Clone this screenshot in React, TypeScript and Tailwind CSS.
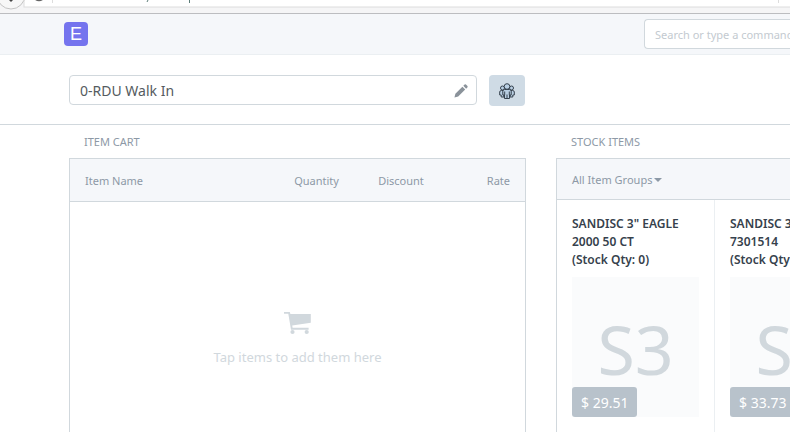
import { useState } from 'react';

const CART_COLUMNS = [
  { label: 'Quantity', className: 'w-[89px] text-center' },
  { label: 'Discount', className: 'w-[80px] text-center' },
  { label: 'Rate', className: 'w-[84px] pr-[15px] text-right' },
];

const ITEMS = [
  { name: 'SANDISC 3" EAGLE 2000 50 CT', qty: 0, abbr: 'S3', price: '$ 29.51' },
  { name: 'SANDISC 3" EAGLE 7301514', qty: 0, abbr: 'S3', price: '$ 33.73' },
];

export default function App() {
  return (
    <div className="h-screen overflow-hidden bg-white font-['Noto_Sans','Open_Sans',sans-serif] text-[#36414c]">
      <BrowserEdge />
      <Navbar />
      <CustomerBar />
      <main className="flex gap-[30px] pl-[69px]">
        <ItemCart />
        <StockItems />
      </main>
    </div>
  );
}

function BrowserEdge() {
  return (
    <div className="h-[14px] overflow-hidden border-b border-[#bcbdc0] bg-[#f5f5f6]">
      <svg width="100%" height="13" aria-hidden="true">
        <rect x="24" y="-10" width="100%" height="17" fill="#fff" stroke="#dcdcdc" />
        <circle cx="11" cy="-5" r="14" fill="#f7f7f7" stroke="#c4c4c4" />
        <path d="M9 0h4l-2 2z" fill="#444" />
        <path d="M35 -1q4 3 8 0" fill="none" stroke="#666" strokeWidth="1.5" />
        <path d="M52.500 0v3M778.500 0v3" stroke="#ddd" />
        <path d="M148 0l-1 2M189.500 0v3" stroke="#5c7c78" />
      </svg>
    </div>
  );
}

function Navbar() {
  return (
    <header className="flex h-[41px] items-center justify-between border-b border-[#ebeff2] bg-[#f5f7fa] pl-16">
      <a
        href="#"
        className="grid size-6 place-items-center rounded bg-[#7574ee] font-['Liberation_Sans',sans-serif] text-lg leading-6 text-white"
      >
        E
      </a>
      <input
        type="text"
        aria-label="Search"
        placeholder="Search or type a command"
        className="h-[30px] w-[146px] rounded-l border border-r-0 border-[#d1d8dd] bg-white pl-2.5 text-[11px] placeholder:text-[#c3cad0] focus:outline-none"
      />
    </header>
  );
}

function CustomerBar() {
  const [customer, setCustomer] = useState('0-RDU Walk In');

  return (
    <div className="flex h-[70px] items-start gap-3 border-b border-[#d1d8dd] pt-5 pl-[69px]">
      <div className="relative w-[408px]">
        <input
          type="text"
          aria-label="Customer"
          value={customer}
          onChange={(e) => setCustomer(e.target.value)}
          className="block h-[30px] w-full rounded border border-[#d1d8dd] pt-px pr-8 pl-2.5 text-sm text-[#555b60] focus:outline-none"
        />
        <PencilIcon />
      </div>
      <button
        type="button"
        aria-label="Customers"
        className="grid h-[31px] w-9 place-items-center rounded bg-[#cfdbe5]"
      >
        <GroupIcon />
      </button>
    </div>
  );
}

function ItemCart() {
  return (
    <section className="w-[457px] shrink-0">
      <h2 className="px-[15px] pt-2 pb-2 text-[11px] leading-[17px] text-[#8d99a6]">ITEM CART</h2>
      <div className="h-[360px] border border-[#d1d8dd]">
        <table className="w-full table-fixed border-separate border-spacing-0 bg-[#f5f7fa] text-[11px] text-[#8d99a6]">
          <thead>
            <tr className="h-[43px]">
              <th className="border-b border-[#d1d8dd] pt-0.5 pl-[15px] text-left font-normal">
                Item Name
              </th>
              {CART_COLUMNS.map((c) => (
                <th
                  key={c.label}
                  className={`${c.className} border-b border-[#d1d8dd] pt-0.5 font-normal`}
                >
                  {c.label}
                </th>
              ))}
            </tr>
          </thead>
        </table>
        <div className="flex flex-col items-center gap-3 pt-[110px] text-[#d1d8dd]">
          <CartIcon />
          <p className="text-[13px] leading-5">Tap items to add them here</p>
        </div>
      </div>
    </section>
  );
}

function StockItems() {
  return (
    <section className="min-w-0 flex-1">
      <h2 className="px-[15px] pt-2 pb-2 text-[11px] leading-[17px] text-[#8d99a6]">STOCK ITEMS</h2>
      <div className="h-[360px] border border-r-0 border-[#d1d8dd]">
        <div className="flex h-[41px] items-center border-b border-[#d1d8dd] bg-[#f5f7fa] px-[15px] pt-0.5">
          <button type="button" className="flex items-center gap-0.5 text-[11px] text-[#8d99a6]">
            All Item Groups
            <svg width="8" height="4" viewBox="0 0 8 4" fill="currentColor" aria-hidden="true">
              <path d="M0 0h8L4 4z" />
            </svg>
          </button>
        </div>
        <div className="flex h-full overflow-hidden">
          {ITEMS.map((item) => (
            <StockItem key={item.name} {...item} />
          ))}
        </div>
      </div>
    </section>
  );
}

function StockItem({ name, qty, abbr, price }: (typeof ITEMS)[number]) {
  return (
    <article className="w-[158px] shrink-0 border-r border-[#ebeff2] px-[15px] pt-[15px]">
      <h3 className="text-xs leading-[18px] font-semibold">
        {name}
        <br />
        (Stock Qty: {qty})
      </h3>
      <div className="relative mt-2 grid h-[140px] place-items-center bg-[#fafbfc] pt-1 text-[68px] leading-none text-[#d1d8dd]">
        {abbr}
        <span className="absolute bottom-0 left-0 rounded-[3px] bg-[#b8c2cb] px-[9px] pt-px text-sm leading-[29px] text-white">
          {price}
        </span>
      </div>
    </article>
  );
}

function PencilIcon() {
  return (
    <svg
      className="absolute top-[9px] right-[9px]"
      width="14"
      height="14"
      viewBox="0 0 15 15"
      fill="#8a929a"
      aria-hidden="true"
    >
      <path d="M0.500 14.500l1-4L9 3l3 3-7.500 7.500z" />
      <path d="M10 2l1.400-1.400q.7-.6 1.400 0l1.600 1.600q.6.7 0 1.400L13 5z" />
    </svg>
  );
}

function GroupIcon() {
  return (
    <svg width="16" height="16" viewBox="0 0 16 16" fill="#b9cfe3" stroke="#36424e" aria-hidden="true">
      <circle cx="3.500" cy="5" r="2" />
      <circle cx="12.500" cy="5" r="2" />
      <path d="M4 7.500H2.500Q.7 7.500.7 9v3h1.500v2H5zM12 7.500h1.500q1.800 0 1.800 1.500v3h-1.500v2H11z" />
      <path d="M5.500 6.500h5q1.700 0 1.700 2V12h-1.700v3.500h-5V12H3.800V8.500q0-2 1.700-2z" />
      <circle cx="8" cy="3.500" r="2.800" />
      <path d="M5.700 8.500v3.500M10.300 8.500v3.500M8 11.500v4" />
    </svg>
  );
}

function CartIcon() {
  return (
    <svg width="27" height="23" viewBox="0 0 27 23" fill="currentColor" aria-hidden="true">
      <path d="M0 0h5.800l.6 2h20.400v8.700L8.200 13.600l.4 2.100h16v2H7L4.300 1.700H0z" />
      <circle cx="8.500" cy="20" r="2.100" />
      <circle cx="22.700" cy="20" r="2.100" />
    </svg>
  );
}
